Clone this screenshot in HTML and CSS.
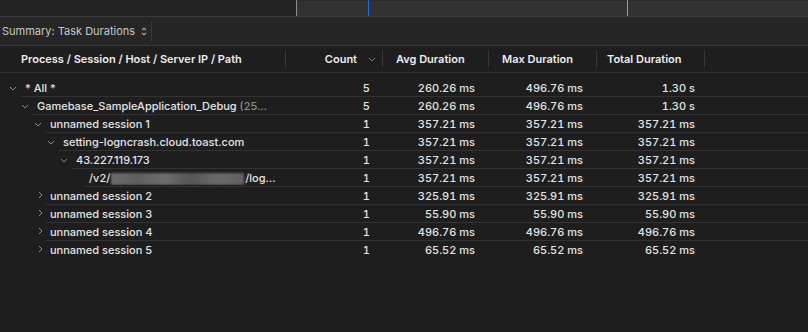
FILE: index.html
```html
<!DOCTYPE html>
<html lang="en">
<head>
    <meta charset="UTF-8">
    <meta name="viewport" content="width=device-width, initial-scale=1.0">
    <title>Task Durations</title>
    <link rel="stylesheet" href="styles.css">
</head>
<body>
    <div class="timeline">
        <div class="timeline-side"></div>
        <div class="timeline-track">
            <span class="marker marker-blue"></span>
            <span class="marker marker-gray"></span>
        </div>
    </div>

    <div class="toolbar">
        <div class="picker">
            Summary: Task Durations
            <svg class="updown" width="6" height="9" viewBox="0 0 6 9"><path d="M1 3.2 3 1.2 5 3.2M1 5.8 3 7.8 5 5.8" fill="none" stroke="#b8b8b8" stroke-width="1.1"/></svg>
        </div>
    </div>

    <div class="head">
        <div class="hcell h-name">Process / Session / Host / Server IP / Path</div>
        <div class="hcell h-count">Count
            <svg class="sort" width="8" height="5" viewBox="0 0 8 5"><path d="M1 1 4 4 7 1" fill="none" stroke="#7a7a7a" stroke-width="1"/></svg>
        </div>
        <div class="hcell h-avg">Avg Duration</div>
        <div class="hcell h-max">Max Duration</div>
        <div class="hcell h-total">Total Duration</div>
    </div>

    <div class="outline">
        <div class="row">
            <div class="twisty l0"><svg class="open" width="8" height="5" viewBox="0 0 8 5"><path d="M1 1 4 4 7 1"/></svg></div>
            <div class="cells">
                <div class="name">* All *</div>
                <div class="num n-count">5</div>
                <div class="num n-avg">260.26 ms</div>
                <div class="num n-max">496.76 ms</div>
                <div class="num n-total">1.30 s</div>
                <div class="rest"></div>
            </div>
        </div>
        <div class="row">
            <div class="twisty l1"><svg class="open" width="8" height="5" viewBox="0 0 8 5"><path d="M1 1 4 4 7 1"/></svg></div>
            <div class="cells">
                <div class="name">Gamebase_SampleApplication_Debug <span class="dim">(25…</span></div>
                <div class="num n-count">5</div>
                <div class="num n-avg">260.26 ms</div>
                <div class="num n-max">496.76 ms</div>
                <div class="num n-total">1.30 s</div>
                <div class="rest"></div>
            </div>
        </div>
        <div class="row">
            <div class="twisty l2"><svg class="open" width="8" height="5" viewBox="0 0 8 5"><path d="M1 1 4 4 7 1"/></svg></div>
            <div class="cells">
                <div class="name">unnamed session 1</div>
                <div class="num n-count">1</div>
                <div class="num n-avg">357.21 ms</div>
                <div class="num n-max">357.21 ms</div>
                <div class="num n-total">357.21 ms</div>
                <div class="rest"></div>
            </div>
        </div>
        <div class="row">
            <div class="twisty l3"><svg class="open" width="8" height="5" viewBox="0 0 8 5"><path d="M1 1 4 4 7 1"/></svg></div>
            <div class="cells">
                <div class="name">setting-logncrash.cloud.toast.com</div>
                <div class="num n-count">1</div>
                <div class="num n-avg">357.21 ms</div>
                <div class="num n-max">357.21 ms</div>
                <div class="num n-total">357.21 ms</div>
                <div class="rest"></div>
            </div>
        </div>
        <div class="row">
            <div class="twisty l4"><svg class="open" width="8" height="5" viewBox="0 0 8 5"><path d="M1 1 4 4 7 1"/></svg></div>
            <div class="cells">
                <div class="name">43.227.119.173</div>
                <div class="num n-count">1</div>
                <div class="num n-avg">357.21 ms</div>
                <div class="num n-max">357.21 ms</div>
                <div class="num n-total">357.21 ms</div>
                <div class="rest"></div>
            </div>
        </div>
        <div class="row">
            <div class="twisty l5"></div>
            <div class="cells">
                <div class="name">/v2/<span class="redacted"></span>/log…</div>
                <div class="num n-count">1</div>
                <div class="num n-avg">357.21 ms</div>
                <div class="num n-max">357.21 ms</div>
                <div class="num n-total">357.21 ms</div>
                <div class="rest"></div>
            </div>
        </div>
        <div class="row">
            <div class="twisty l2"><svg class="closed" width="5" height="8" viewBox="0 0 5 8"><path d="M1 1 4 4 1 7"/></svg></div>
            <div class="cells">
                <div class="name">unnamed session 2</div>
                <div class="num n-count">1</div>
                <div class="num n-avg">325.91 ms</div>
                <div class="num n-max">325.91 ms</div>
                <div class="num n-total">325.91 ms</div>
                <div class="rest"></div>
            </div>
        </div>
        <div class="row">
            <div class="twisty l2"><svg class="closed" width="5" height="8" viewBox="0 0 5 8"><path d="M1 1 4 4 1 7"/></svg></div>
            <div class="cells">
                <div class="name">unnamed session 3</div>
                <div class="num n-count">1</div>
                <div class="num n-avg">55.90 ms</div>
                <div class="num n-max">55.90 ms</div>
                <div class="num n-total">55.90 ms</div>
                <div class="rest"></div>
            </div>
        </div>
        <div class="row">
            <div class="twisty l2"><svg class="closed" width="5" height="8" viewBox="0 0 5 8"><path d="M1 1 4 4 1 7"/></svg></div>
            <div class="cells">
                <div class="name">unnamed session 4</div>
                <div class="num n-count">1</div>
                <div class="num n-avg">496.76 ms</div>
                <div class="num n-max">496.76 ms</div>
                <div class="num n-total">496.76 ms</div>
                <div class="rest"></div>
            </div>
        </div>
        <div class="row last">
            <div class="twisty l2"><svg class="closed" width="5" height="8" viewBox="0 0 5 8"><path d="M1 1 4 4 1 7"/></svg></div>
            <div class="cells">
                <div class="name">unnamed session 5</div>
                <div class="num n-count">1</div>
                <div class="num n-avg">65.52 ms</div>
                <div class="num n-max">65.52 ms</div>
                <div class="num n-total">65.52 ms</div>
                <div class="rest"></div>
            </div>
        </div>
    </div>
</body>
</html>
```

FILE: styles.css
```css
html, body { margin: 0; height: 100%; background: #1e1e1e; }
body { font-family: Inter, "Noto Sans", sans-serif; font-size: 11px; font-weight: 500; color: #e4e4e4; overflow: hidden; }

.timeline { display: flex; height: 16px; border-bottom: 1px solid #3a3a3a; }
.timeline-side { width: 296px; background: #232323; border-right: 1px solid #8c8c8c; }
.timeline-track { flex: 1; position: relative; background: #323232; border-top: 1px solid #2a2a2a; }
.marker { position: absolute; top: -1px; bottom: 0; width: 1px; }
.marker-blue { left: 71px; background: #1f6fe0; }
.marker-gray { left: 330px; background: #9a9a9a; }

.toolbar { display: flex; align-items: center; height: 28px; background: #262626; border-bottom: 1px solid #3a3a3a; }
.picker { display: flex; align-items: center; width: 149px; height: 20px; padding-left: 2px; border-right: 1px solid #3c3c3c; color: #c6c6c6; font-weight: 400; }
.updown { margin-left: 6px; }

.head { display: flex; align-items: center; height: 26px; border-bottom: 1px solid #303030; font-weight: 600; color: #ececec; }
.hcell { height: 16px; line-height: 16px; border-right: 1px solid #3a3a3a; box-sizing: border-box; white-space: nowrap; }
.h-name { width: 286px; padding-left: 21px; }
.h-count { width: 97px; display: flex; align-items: center; justify-content: flex-end; padding-right: 6px; }
.sort { margin-left: 11px; }
.h-avg { width: 106px; padding-left: 13px; }
.h-max { width: 108px; padding-left: 13px; }
.h-total { width: 108px; padding-left: 10px; }

.outline { padding-top: 6px; }
.row { display: flex; height: 18px; }
.twisty { display: flex; align-items: center; justify-content: flex-end; flex: none; padding-right: 4px; box-sizing: border-box; }
.twisty svg path { fill: none; stroke: #8a8a8a; stroke-width: 1; }
.twisty .closed { margin-right: -1px; margin-top: -3px; }
.l0 { width: 21px; }
.l1 { width: 33px; }
.l2 { width: 46px; }
.l3 { width: 59px; }
.l4 { width: 72px; }
.l5 { width: 85px; }

.cells { flex: 1; display: flex; align-items: center; border-bottom: 1px solid #333; }
.last .cells { border-bottom: none; }
.name { flex: 1; min-width: 0; padding-left: 4px; white-space: nowrap; overflow: hidden; }
.dim { color: #8c8c8c; }
.redacted { display: inline-block; vertical-align: middle; width: 133px; height: 12px; margin: 0 1px; background: linear-gradient(90deg, #6c6c6c 0%, #5e5e5e 20%, #6e6e6e 40%, #555 60%, #6a6a6a 80%, #606060 100%); filter: blur(1px); }
.num { flex: none; text-align: right; white-space: nowrap; font-variant-numeric: tabular-nums; }
.n-count { width: 85px; }
.n-avg { width: 105px; }
.n-max { width: 108px; }
.n-total { width: 112px; }
.rest { width: 113px; flex: none; }
```
